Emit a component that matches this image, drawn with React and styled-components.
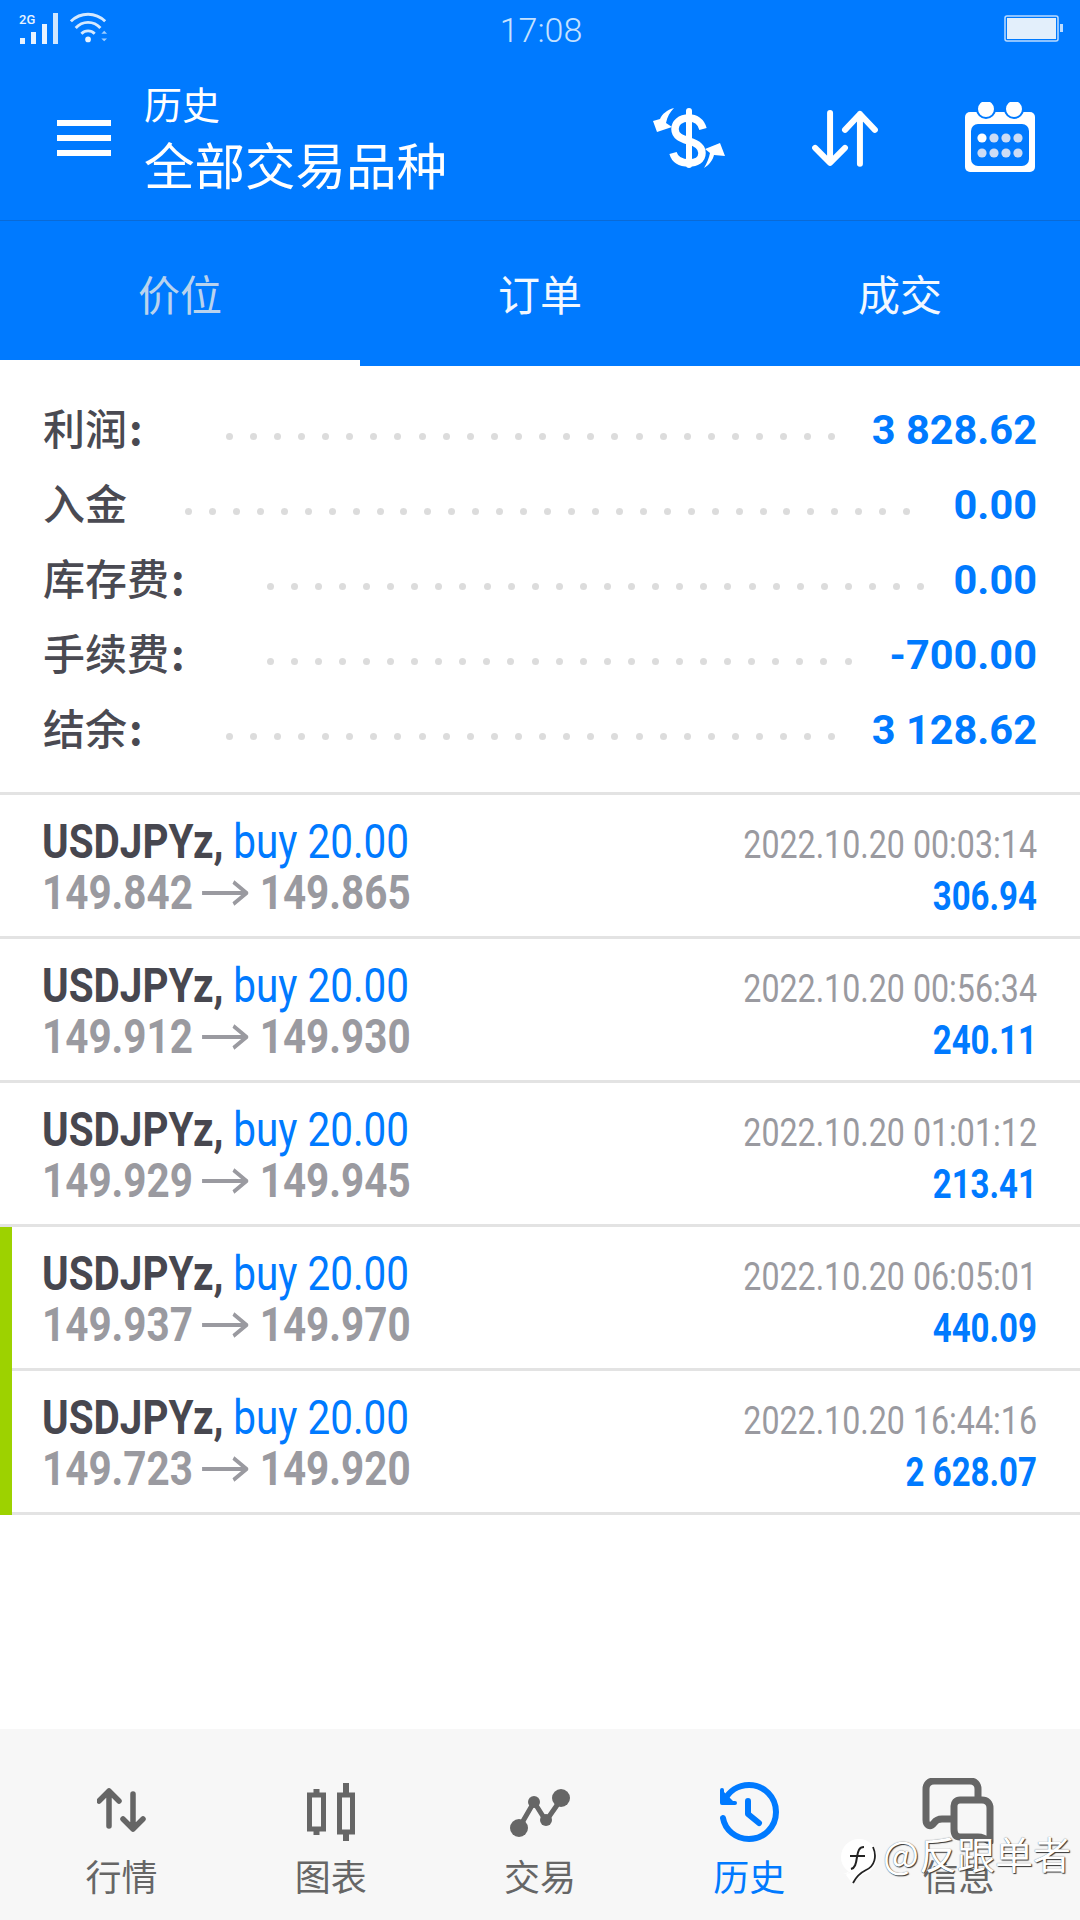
import React from 'react';
import styled, { createGlobalStyle } from 'styled-components';

const BLUE = '#007aff';
const CJK = '"Noto Sans CJK SC", "Noto Sans", sans-serif';
const NUM = 'Roboto, "Noto Sans CJK SC", sans-serif';

const GlobalStyle = createGlobalStyle`
    html, body {
        margin: 0;
        padding: 0;
        background: #fff;
    }
    * {
        box-sizing: border-box;
    }
`;

const Page = styled.div`
    position: relative;
    width: 1080px;
    height: 1920px;
    display: flex;
    flex-direction: column;
    overflow: hidden;
    background: #fff;
    font-family: ${CJK};
`;

const TopArea = styled.header`
    background: ${BLUE};
    color: #fff;
`;

const StatusBar = styled.div`
    height: 60px;
    padding: 12px 16px 0 18px;
    display: grid;
    grid-template-columns: 1fr auto 1fr;
    align-items: start;
`;

const StatusLeft = styled.div`
    display: flex;
    align-items: flex-start;
    gap: 10px;
`;

const StatusRight = styled.div`
    display: flex;
    justify-content: flex-end;
    padding-top: 3px;
`;

const Clock = styled.span`
    font-family: ${NUM};
    font-weight: 300;
    font-size: 34px;
    line-height: 36px;
    color: #c5e2ff;
`;

const Toolbar = styled.div`
    height: 161px;
    padding: 0 45px 0 57px;
    display: flex;
    align-items: flex-start;
    border-bottom: 1px solid #0a6ad6;
`;

const Burger = styled.div`
    width: 54px;
    margin-top: 60px;
    display: flex;
    flex-direction: column;
    gap: 9px;
    flex-shrink: 0;

    span {
        height: 6px;
        background: #fff;
    }
`;

const TitleBlock = styled.div`
    margin-left: 33px;
    margin-top: 19px;
    flex: 1;
`;

const SubTitle = styled.div`
    font-size: 38px;
    line-height: 48px;
`;

const MainTitle = styled.div`
    font-size: 50.5px;
    line-height: 64px;
    margin-top: 4px;
`;

const ToolIcons = styled.div`
    display: flex;
    align-items: flex-start;
    margin-top: 42px;
`;

const ToolSlot = styled.div`
    margin-left: ${(props) => props.$gap}px;
    margin-top: ${(props) => props.$top}px;
    line-height: 0;
`;

const Tabs = styled.nav`
    height: 145px;
    display: grid;
    grid-template-columns: repeat(3, 1fr);
`;

const Tab = styled.div`
    display: flex;
    align-items: center;
    justify-content: center;
    padding-top: 4px;
    font-size: 42px;
    color: ${(props) => (props.$active ? '#b9d3ee' : '#f2f8ff')};
    border-bottom: 6px solid ${(props) => (props.$active ? '#fff' : BLUE)};
`;

const Summary = styled.section`
    height: 429px;
    padding: 26px 43px 0;
    border-bottom: 3px solid #e3e3e3;
`;

const SummaryRow = styled.div`
    height: 75px;
    display: flex;
    align-items: center;
`;

const SummaryLabel = styled.span`
    margin-bottom: 6px;
    font-size: 42px;
    font-weight: 500;
    color: #4a4a52;
    white-space: nowrap;
`;

const Colon = styled.span`
    margin-left: 2px;
    font-weight: 700;
`;

const Dots = styled.span`
    flex: 1;
    display: flex;
    justify-content: space-between;
    margin: 13px ${(props) => props.$right}px 0 ${(props) => props.$left}px;
`;

const Dot = styled.i`
    width: 7px;
    height: 7px;
    border-radius: 50%;
    background: #dcdcdc;
`;

const SummaryValue = styled.span`
    font-family: ${NUM};
    font-weight: 700;
    font-size: 41.5px;
    color: ${BLUE};
    white-space: nowrap;
`;

const DealRow = styled.div`
    height: ${(props) => props.$height}px;
    display: flex;
    border-left: ${(props) => (props.$marked ? '12px solid #9dd200' : 'none')};
`;

const DealBody = styled.div`
    flex: 1;
    display: flex;
    justify-content: space-between;
    padding: 21px 43px 0 ${(props) => (props.$marked ? 30 : 42)}px;
    border-bottom: 3px solid #e3e3e3;
`;

const Condensed = styled.div`
    font-family: ${NUM};
    white-space: nowrap;
    transform: scaleX(0.825);
    transform-origin: ${(props) => (props.$right ? 'right' : 'left')} center;
`;

const DealLine = styled(Condensed)`
    display: flex;
    align-items: center;
    height: 51px;
    line-height: 51px;
    font-size: 49px;
    font-weight: 700;
`;

const Symbol = styled.span`
    color: #47474f;
`;

const Side = styled.span`
    color: ${BLUE};
    font-weight: 400;
    margin-left: 12px;
`;

const Price = styled(DealLine)`
    color: #9a9aa0;
`;

const ArrowSlot = styled.span`
    display: inline-flex;
    margin: 0 14px 0 11px;
`;

const DealRight = styled.div`
    padding-top: 4px;
    text-align: right;
`;

const DealDate = styled(Condensed)`
    height: 51px;
    line-height: 51px;
    font-size: 39px;
    color: #9a9aa0;
`;

const DealProfit = styled(Condensed)`
    height: 51px;
    line-height: 51px;
    font-size: 40px;
    font-weight: 700;
    color: ${BLUE};
`;

const BottomNav = styled.footer`
    margin-top: auto;
    height: 191px;
    padding: 0 17px;
    display: grid;
    grid-template-columns: repeat(5, 1fr);
    background: #f7f7f7;
`;

const NavItem = styled.div`
    display: flex;
    flex-direction: column;
    align-items: center;
    color: ${(props) => (props.$active ? BLUE : '#666')};
`;

const NavIcon = styled.div`
    height: 123px;
    display: flex;
    align-items: flex-end;
    padding-bottom: ${(props) => props.$lift}px;
    line-height: 0;
`;

const NavLabel = styled.div`
    font-size: 36px;
    line-height: 46px;
`;

const Watermark = styled.div`
    position: absolute;
    left: 840px;
    top: 1829px;
    display: flex;
    align-items: flex-start;
    gap: 6px;
    color: #fff;
    font-size: 38px;
    line-height: 48px;
    text-shadow: 1px 1px 1px #333, 0 0 1px #666;
    white-space: nowrap;
`;

const LogoSlot = styled.span`
    margin-top: 10px;
    line-height: 0;
`;

const SignalIcon = () => (
    <svg width="42" height="32" viewBox="0 0 42 32">
        <text x="1" y="12" fontFamily="Roboto, sans-serif" fontSize="13" fontWeight="500" fill="#e8f3ff">2G</text>
        <rect x="2" y="26" width="5" height="6" fill="#e8f3ff" />
        <rect x="13" y="20" width="5" height="12" fill="#e8f3ff" />
        <rect x="24" y="12" width="5" height="20" fill="#e8f3ff" />
        <rect x="35" y="1" width="5" height="31" fill="#cfe6ff" />
    </svg>
);

const WifiIcon = () => (
    <svg width="38" height="32" viewBox="0 0 40 32" fill="none" stroke="#d5e9ff" strokeWidth="3">
        <path d="M1 9C11 -1 27 -1 37 9" />
        <path d="M6 16C13 8 25 8 32 16" />
        <path d="M12 22C16 18 22 18 26 22" />
        <circle cx="19" cy="28" r="3" fill="#e8f3ff" stroke="none" />
        <path d="M33 22l3-3 3 3zM33 27l3 3 3-3z" fill="#9fceff" stroke="none" />
    </svg>
);

const BatteryIcon = () => (
    <svg width="60" height="28" viewBox="0 0 60 28">
        <rect x="1" y="1" width="53" height="25" rx="2" fill="none" stroke="#bcdcff" strokeWidth="1.5" />
        <rect x="3" y="3" width="49" height="21" fill="#e3effb" />
        <rect x="56" y="9" width="3" height="8" fill="#bcdcff" />
    </svg>
);

const DollarSwapIcon = () => (
    <svg width="72" height="60" viewBox="0 0 72 60" fill="none" stroke="#fff">
        <path d="M36 3V57" strokeWidth="6" strokeLinecap="round" />
        <path d="M50 21C48 13 42 10 36 10C27 10 22 15 22 21C22 29 30 31 36 33C43 35 49 38 49 45C49 52 43 55 36 55C28 55 22 52 20 45" strokeWidth="7.5" />
        <path d="M21 0C14 2 9 6 7 11L0 13L4 24L19 19L13 15C14 9 17 4 21 0Z" fill="#fff" stroke="none" />
        <path d="M51 60C56 57 60 52 61 47L72 48L67 35L52 41L57 45C56 50 54 55 51 60Z" fill="#fff" stroke="none" />
    </svg>
);

const SwapIcon = ({ size = 66, color = '#fff', width = 6 }) => (
    <svg width={size} height={size * 0.86} viewBox="0 0 66 57" fill="none" stroke={color} strokeWidth={width} strokeLinecap="round" strokeLinejoin="round">
        <path d="M18 3V52M3 38L18 53L33 38" />
        <path d="M48 54V4M33 20L48 4L63 20" />
    </svg>
);

const CalendarIcon = () => (
    <svg width="70" height="70" viewBox="0 0 70 70">
        <rect x="0" y="10" width="70" height="60" rx="5" fill="#fff" />
        <circle cx="21" cy="7" r="9" fill="#fff" stroke={BLUE} strokeWidth="2" />
        <circle cx="49" cy="7" r="9" fill="#fff" stroke={BLUE} strokeWidth="2" />
        <rect x="6" y="22" width="58" height="42" rx="7" fill={BLUE} />
        {[17, 29, 41, 53].map((x, i) =>
            [36, 51].map((y) => (
                <circle key={`${x}-${y}`} cx={x} cy={y} r="4.6" fill={i === 0 && y === 36 ? '#fff' : '#ccdcf5'} />
            ))
        )}
    </svg>
);

const PriceArrow = () => (
    <svg width="56" height="26" viewBox="0 0 56 26" fill="none" stroke="#9a9aa0" strokeWidth="4">
        <path d="M0 13H54M38 2L54 13L38 24" />
    </svg>
);

const QuotesIcon = () => (
    <svg width="49" height="44" viewBox="0 0 49 44" fill="none" stroke="#666" strokeWidth="5.5" strokeLinecap="round" strokeLinejoin="round">
        <path d="M12 38V3M2 13L12 3L22 13" />
        <path d="M36 6V41M26 31L36 41L46 31" />
    </svg>
);

const CandleIcon = () => (
    <svg width="48" height="58" viewBox="0 0 48 58" fill="none" stroke="#666">
        <path d="M9.5 6V52M39 0V58" strokeWidth="6" />
        <rect x="2.5" y="12" width="14" height="34" fill="#f7f7f7" strokeWidth="5" />
        <rect x="32.5" y="12" width="13" height="37" fill="#f7f7f7" strokeWidth="5" />
    </svg>
);

const TradeIcon = () => (
    <svg width="60" height="48" viewBox="0 0 60 48">
        <path d="M9 39L24 13L36 32L52 9" fill="none" stroke="#666" strokeWidth="5" />
        <circle cx="9" cy="39" r="9" fill="#666" />
        <circle cx="24" cy="13" r="6" fill="#666" />
        <circle cx="36" cy="31" r="6" fill="#666" />
        <circle cx="51" cy="9" r="9" fill="#666" />
    </svg>
);

const HistoryIcon = () => (
    <svg width="60" height="60" viewBox="0 0 60 60" fill="none" stroke={BLUE} strokeWidth="6" strokeLinecap="round" strokeLinejoin="round">
        <path d="M5 19C10 9 19 3 30 3C45 3 57 15 57 30C57 45 45 57 30 57C17 57 6 48 4 36" />
        <path d="M3 8V21H16" fill={BLUE} strokeWidth="4" />
        <path d="M29 19V32L40 41" />
    </svg>
);

const MessageIcon = () => (
    <svg width="72" height="66" viewBox="0 0 72 66" fill="none" stroke="#666" strokeWidth="7" strokeLinejoin="round">
        <path d="M56 20V11C56 6 53 3 48 3H12C7 3 4 6 4 11V42C4 47 8 50 12 45C14 42 17 41 20 41H34" />
        <path d="M38 22H60C65 22 68 25 68 30V64C63 60 60 59 56 59H38C33 59 32 55 32 51V28C32 25 34 22 38 22Z" />
    </svg>
);

const WatermarkLogo = () => (
    <svg width="37" height="46" viewBox="0 0 37 46">
        <circle cx="19" cy="18" r="18" fill="#fff" />
        <path d="M3 35C7 34 10 32 13 29L6 36L12 44C16 40 22 36 29 32Z" fill="#fff" />
        <path d="M24 8C19 8 18 12 17 18C16 25 15 29 11 30M10 17H25" fill="none" stroke="#222" strokeWidth="2" />
        <path d="M33 8C37 17 35 27 26 31C20 34 16 38 13 44" fill="none" stroke="#222" strokeWidth="1.8" />
    </svg>
);

const summaryRows = [
    { label: '利润', colon: true, value: '3 828.62', left: 83, right: 36, dots: 26 },
    { label: '入金', value: '0.00', left: 58, right: 43, dots: 31 },
    { label: '库存费', colon: true, value: '0.00', left: 82, right: 29, dots: 28 },
    { label: '手续费', colon: true, value: '-700.00', left: 82, right: 38, dots: 25 },
    { label: '结余', colon: true, value: '3 128.62', left: 83, right: 36, dots: 26 },
];

const deals = [
    { open: '149.842', close: '149.865', time: '2022.10.20 00:03:14', profit: '306.94', height: 144 },
    { open: '149.912', close: '149.930', time: '2022.10.20 00:56:34', profit: '240.11', height: 144 },
    { open: '149.929', close: '149.945', time: '2022.10.20 01:01:12', profit: '213.41', height: 144 },
    { open: '149.937', close: '149.970', time: '2022.10.20 06:05:01', profit: '440.09', height: 144, marked: true },
    { open: '149.723', close: '149.920', time: '2022.10.20 16:44:16', profit: '2 628.07', height: 144, marked: true },
];

const navItems = [
    { label: '行情', icon: <QuotesIcon />, lift: 20 },
    { label: '图表', icon: <CandleIcon />, lift: 11 },
    { label: '交易', icon: <TradeIcon />, lift: 15 },
    { label: '历史', icon: <HistoryIcon />, lift: 10, active: true },
    { label: '信息', icon: <MessageIcon />, lift: 8 },
];

function App() {
    return (
        <Page>
            <GlobalStyle />
            <TopArea>
                <StatusBar>
                    <StatusLeft>
                        <SignalIcon />
                        <WifiIcon />
                    </StatusLeft>
                    <Clock>17:08</Clock>
                    <StatusRight>
                        <BatteryIcon />
                    </StatusRight>
                </StatusBar>
                <Toolbar>
                    <Burger>
                        <span />
                        <span />
                        <span />
                    </Burger>
                    <TitleBlock>
                        <SubTitle>历史</SubTitle>
                        <MainTitle>全部交易品种</MainTitle>
                    </TitleBlock>
                    <ToolIcons>
                        <ToolSlot $gap={0} $top={6}>
                            <DollarSwapIcon />
                        </ToolSlot>
                        <ToolSlot $gap={87} $top={8}>
                            <SwapIcon />
                        </ToolSlot>
                        <ToolSlot $gap={87} $top={0}>
                            <CalendarIcon />
                        </ToolSlot>
                    </ToolIcons>
                </Toolbar>
                <Tabs>
                    <Tab $active>价位</Tab>
                    <Tab>订单</Tab>
                    <Tab>成交</Tab>
                </Tabs>
            </TopArea>

            <Summary>
                {summaryRows.map((row) => (
                    <SummaryRow key={row.label}>
                        <SummaryLabel>
                            {row.label}
                            {row.colon && <Colon>:</Colon>}
                        </SummaryLabel>
                        <Dots $left={row.left} $right={row.right}>
                            {Array.from({ length: row.dots }, (_, i) => (
                                <Dot key={i} />
                            ))}
                        </Dots>
                        <SummaryValue>{row.value}</SummaryValue>
                    </SummaryRow>
                ))}
            </Summary>

            {deals.map((deal) => (
                <DealRow key={deal.time} $height={deal.height} $marked={deal.marked}>
                    <DealBody $marked={deal.marked}>
                        <div>
                            <DealLine>
                                <Symbol>USDJPYz,</Symbol>
                                <Side>buy 20.00</Side>
                            </DealLine>
                            <Price>
                                {deal.open}
                                <ArrowSlot>
                                    <PriceArrow />
                                </ArrowSlot>
                                {deal.close}
                            </Price>
                        </div>
                        <DealRight>
                            <DealDate $right>{deal.time}</DealDate>
                            <DealProfit $right>{deal.profit}</DealProfit>
                        </DealRight>
                    </DealBody>
                </DealRow>
            ))}

            <BottomNav>
                {navItems.map((item) => (
                    <NavItem key={item.label} $active={item.active}>
                        <NavIcon $lift={item.lift}>{item.icon}</NavIcon>
                        <NavLabel>{item.label}</NavLabel>
                    </NavItem>
                ))}
            </BottomNav>

            <Watermark>
                <LogoSlot>
                    <WatermarkLogo />
                </LogoSlot>
                <span>@反跟单者</span>
            </Watermark>
        </Page>
    );
}

export default App;
